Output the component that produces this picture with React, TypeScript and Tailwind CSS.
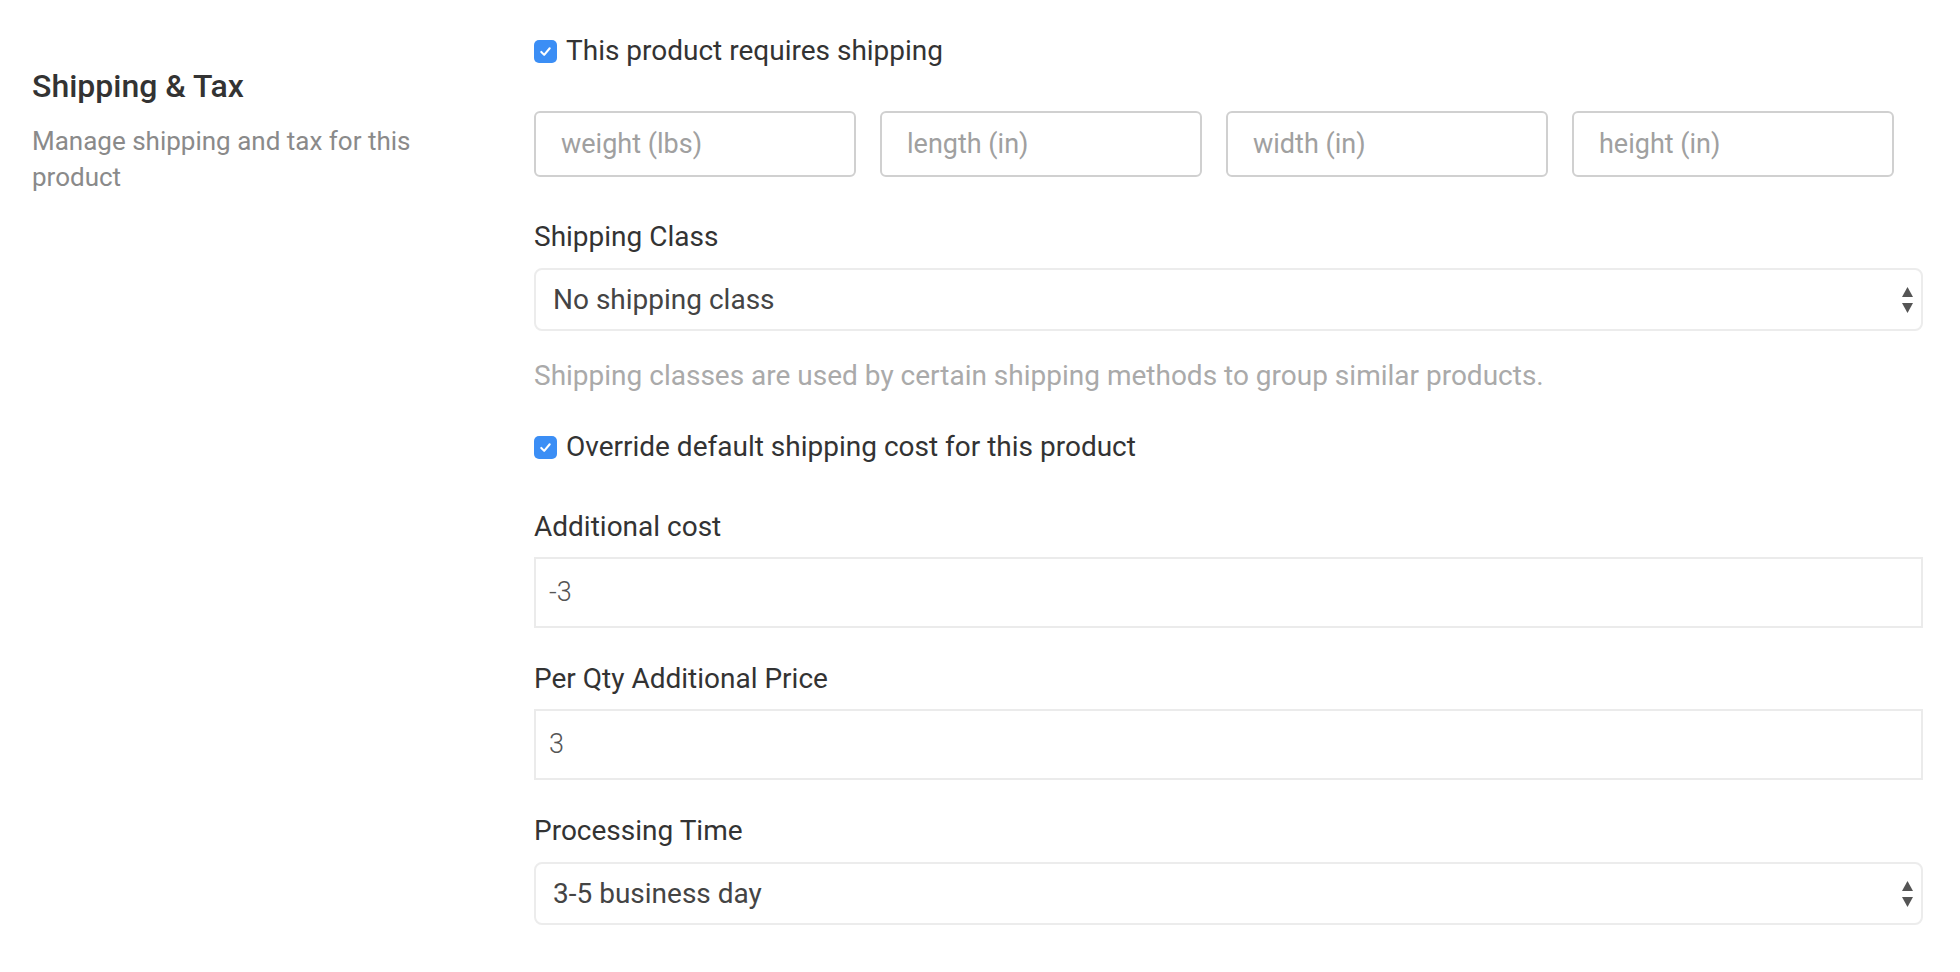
import React from "react";

const font = { fontFamily: "Roboto, 'Noto Sans', sans-serif" };

function Check() {
  return (
    <span className="flex h-[23px] w-[23px] shrink-0 items-center justify-center rounded-[5px] bg-[#3b8ef5]">
      <svg width="15" height="15" viewBox="0 0 16 16" fill="none">
        <path d="M3.5 8.5 L6.6 11.6 L12.5 4.5" stroke="#fff" strokeWidth="2.2" strokeLinecap="round" strokeLinejoin="round" />
      </svg>
    </span>
  );
}

function Arrows() {
  return (
    <span className="flex flex-col items-center gap-[6px]">
      <svg width="11" height="10" viewBox="0 0 11 10"><path d="M5.5 0 L11 10 L0 10 Z" fill="#555" /></svg>
      <svg width="11" height="10" viewBox="0 0 11 10"><path d="M0 0 L11 0 L5.5 10 Z" fill="#555" /></svg>
    </span>
  );
}

function CheckRow({ text }: { text: string }) {
  return (
    <label className="flex h-[36px] items-center gap-[9px] text-[28px] leading-[36px] text-[#333]">
      <Check />
      <span>{text}</span>
    </label>
  );
}

function Label({ text }: { text: string }) {
  return <div className="h-[36px] text-[28px] leading-[36px] text-[#333]">{text}</div>;
}

function SelectBox({ value }: { value: string }) {
  return (
    <div className="flex h-[63px] items-center justify-between rounded-[8px] border-2 border-[#ececec] bg-white pl-[17px] pr-[8px] text-[28px] text-[#444]">
      <span>{value}</span>
      <Arrows />
    </div>
  );
}

function TextBox({ value }: { value: string }) {
  return (
    <div className="flex h-[71px] items-center border-2 border-[#ebebeb] bg-white pl-[13px] text-[27px] font-light text-[#555]">
      {value}
    </div>
  );
}

export default function App() {
  return (
    <div className="min-h-[972px] w-full bg-white" style={font}>
      <div className="flex pl-[32px]">
        <div className="w-[502px] pt-[68px]">
          <div className="text-[32px] font-medium leading-[36px] text-[#333]">Shipping &amp; Tax</div>
          <div className="mt-[19px] w-[400px] text-[26px] leading-[36px] text-[#8a8a8a]">
            Manage shipping and tax for this product
          </div>
        </div>
        <div className="flex w-[1389px] flex-col pt-[33px]">
          <CheckRow text="This product requires shipping" />
          <div className="mt-[42px] flex w-[1360px] gap-[24px]">
            {["weight (lbs)", "length (in)", "width (in)", "height (in)"].map((p) => (
              <div
                key={p}
                className="flex h-[66px] flex-1 items-center rounded-[6px] border-2 border-[#d0d0d0] pl-[25px] text-[27px] text-[#a0a0a0]"
              >
                {p}
              </div>
            ))}
          </div>
          <div className="mt-[42px]">
            <Label text="Shipping Class" />
          </div>
          <div className="mt-[13px]">
            <SelectBox value="No shipping class" />
          </div>
          <div className="mt-[27px] h-[36px] text-[28px] leading-[36px] text-[#aaaaaa]">
            Shipping classes are used by certain shipping methods to group similar products.
          </div>
          <div className="mt-[35px]">
            <CheckRow text="Override default shipping cost for this product" />
          </div>
          <div className="mt-[44px]">
            <Label text="Additional cost" />
          </div>
          <div className="mt-[12px]">
            <TextBox value="-3" />
          </div>
          <div className="mt-[33px]">
            <Label text="Per Qty Additional Price" />
          </div>
          <div className="mt-[12px]">
            <TextBox value="3" />
          </div>
          <div className="mt-[33px]">
            <Label text="Processing Time" />
          </div>
          <div className="mt-[13px]">
            <SelectBox value="3-5 business day" />
          </div>
        </div>
      </div>
    </div>
  );
}
